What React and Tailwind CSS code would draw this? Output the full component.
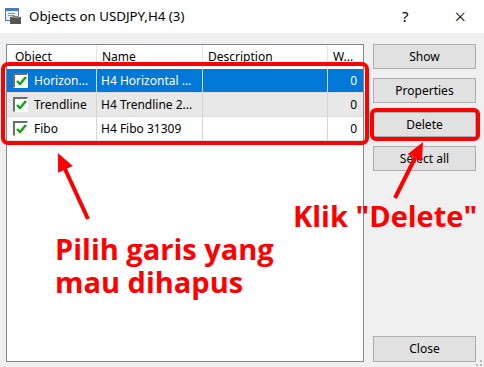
const rows = [
  { obj: 'Horizon...', name: 'H4 Horizontal ...', w: '0', selected: true },
  { obj: 'Trendline', name: 'H4 Trendline 2...', w: '0', alt: true },
  { obj: 'Fibo', name: 'H4 Fibo 31309', w: '0' },
]

function Check() {
  return (
    <div className="w-[15px] h-[15px] border-t-2 border-l-2 border-t-[#6d6d6d] border-l-[#6d6d6d] border-b border-r border-b-white border-r-white bg-white flex items-center justify-center shrink-0">
      <svg width="11" height="10" viewBox="0 0 11 10">
        <path d="M1 5 L4 8 L10 1" stroke="#10a010" strokeWidth="2.4" fill="none" />
      </svg>
    </div>
  )
}

function Btn({ children, className = '' }) {
  return (
    <div className={`h-[25px] w-[103px] border border-[#adadad] bg-[#e1e1e1] flex items-center justify-center text-[12px] text-black ${className}`}>
      {children}
    </div>
  )
}

export default function App() {
  return (
    <div className="relative w-[484px] h-[367px] overflow-hidden bg-[#f0f0f0] font-['Noto_Sans',sans-serif]">
      <div className="h-[33px] bg-white flex items-center">
        <svg className="ml-[5px]" width="18" height="17" viewBox="0 0 18 17">
          <rect x="0.5" y="0.5" width="13" height="12" fill="#e8eef6" stroke="#4a7cc0" />
          <rect x="1" y="1" width="12" height="2" fill="#4a7cc0" />
          <rect x="3" y="5" width="7" height="1" fill="#8898a8" />
          <rect x="3" y="7" width="7" height="1" fill="#8898a8" />
          <rect x="5" y="9" width="11" height="7" fill="#555" />
          <rect x="7" y="8" width="7" height="2" fill="#888" />
        </svg>
        <span className="ml-[6px] text-[13.3px] text-black">Objects on USDJPY,H4 (3)</span>
        <span className="ml-auto text-[15px] text-black">?</span>
        <span className="ml-[46px] mr-[18px] text-[20px] font-light text-black">×</span>
      </div>

      <div className="flex pt-[11px] pl-[6px]">
        <div className="w-[358px] h-[318px] border border-[#828790] bg-white text-[12px] text-black">
          <div className="flex h-[24px]">
            <div className="w-[90px] border-r border-[#e5e5e5] pl-[8px] flex items-center">Object</div>
            <div className="w-[106px] border-r border-[#e5e5e5] pl-[5px] flex items-center">Name</div>
            <div className="w-[125px] border-r border-[#e5e5e5] pl-[5px] flex items-center">Description</div>
            <div className="w-[35px] pl-[5px] flex items-center">W...</div>
          </div>
          {rows.map((r) => (
            <div
              key={r.obj}
              className={`flex h-[24px] border-b border-[#dcdcdc] ${r.selected ? 'bg-[#0078d7] text-white' : r.alt ? 'bg-[#e8e8e8]' : 'bg-white'}`}
            >
              <div className="w-[90px] border-r border-[#d4d4d4] pl-[6px] flex items-center gap-[6px]">
                <Check />
                <span className="whitespace-nowrap">{r.obj}</span>
              </div>
              <div className="w-[106px] border-r border-[#d4d4d4] pl-[4px] flex items-center whitespace-nowrap">{r.name}</div>
              <div className="w-[125px] border-r border-[#d4d4d4]" />
              <div className="w-[35px] pr-[6px] flex items-center justify-end">{r.w}</div>
            </div>
          ))}
        </div>

        <div className="ml-[9px] h-[318px] flex flex-col gap-[9px]">
          <Btn>Show</Btn>
          <Btn>Properties</Btn>
          <Btn>Delete</Btn>
          <Btn>Select all</Btn>
          <Btn className="mt-auto h-[26px]">Close</Btn>
        </div>
      </div>

      <svg className="absolute inset-0 pointer-events-none" width="484" height="367">
        <rect x="3" y="64" width="364" height="79" rx="5" fill="none" stroke="#ff0000" strokeWidth="4" />
        <rect x="372" y="110" width="106" height="29" rx="4" fill="none" stroke="#ff0000" strokeWidth="4" />
        <line x1="88" y1="219" x2="65" y2="169" stroke="#ff0000" strokeWidth="4" />
        <polygon points="58,153 72.7,166.1 58.1,172.7" fill="#ff0000" />
        <line x1="395" y1="198" x2="415" y2="158" stroke="#ff0000" strokeWidth="4" />
        <polygon points="423,142 421.8,161.7 407.6,154.3" fill="#ff0000" />
        <g fill="#b8b8b8">
          <rect x="480" y="360" width="2" height="2" />
          <rect x="480" y="364" width="2" height="2" />
          <rect x="476" y="364" width="2" height="2" />
        </g>
      </svg>

      <div className="absolute left-[55px] top-[232px] font-['Open_Sans',sans-serif] font-bold text-[29px] leading-[33px] text-[#ff0000] whitespace-nowrap">
        Pilih garis yang
        <br />
        mau dihapus
      </div>
      <div className="absolute left-[293px] top-[199px] font-['Open_Sans',sans-serif] font-bold text-[29px] leading-[33px] text-[#ff0000] whitespace-nowrap">
        Klik "Delete"
      </div>
    </div>
  )
}
